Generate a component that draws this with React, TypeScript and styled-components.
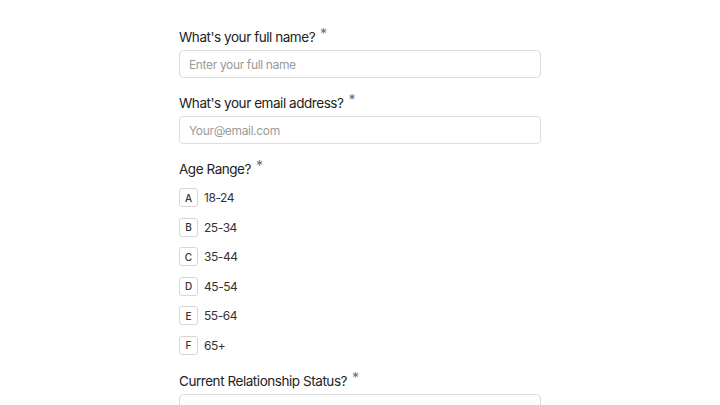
import React from 'react'
import styled, { createGlobalStyle } from 'styled-components'

const GlobalStyle = createGlobalStyle`
  html, body {
    margin: 0;
    padding: 0;
    background: #ffffff;
  }
  body {
    font-family: Inter, "Noto Sans", sans-serif;
    color: #262626;
    overflow: hidden;
  }
`

const Form = styled.form`
  width: 362px;
  margin: 0 auto;
  padding-top: 27px;
  display: flex;
  flex-direction: column;
`

const Field = styled.div<{ $after?: number }>`
  display: flex;
  flex-direction: column;
  margin-bottom: ${(p) => p.$after ?? 15}px;
`

const Label = styled.label<{ $gap?: number }>`
  font-size: 13.5px;
  font-weight: 420;
  letter-spacing: -0.45px;
  line-height: 20px;
  color: #222;
  margin-bottom: ${(p) => p.$gap ?? 3}px;
`

const Star = styled.span`
  display: inline-block;
  margin-left: 5px;
  font-size: 14px;
  font-weight: 400;
  color: #6b6b6b;
  position: relative;
  top: -3px;
`

const Input = styled.input`
  box-sizing: border-box;
  height: 28px;
  width: 100%;
  border: 1px solid #dcdcdc;
  border-radius: 4px;
  padding: 0 9px;
  font-family: Inter, "Noto Sans", sans-serif;
  font-size: 12px;
  letter-spacing: -0.35px;
  color: #262626;
  outline: none;
  &::placeholder {
    color: #9a9a9a;
  }
`

const Options = styled.div`
  display: flex;
  flex-direction: column;
  gap: 10.6px;
`

const Option = styled.div`
  display: flex;
  align-items: center;
  gap: 6px;
  height: 19px;
`

const Key = styled.span`
  box-sizing: border-box;
  width: 19px;
  height: 19px;
  border: 1px solid #d6d6d6;
  border-radius: 3px;
  display: flex;
  align-items: center;
  justify-content: center;
  font-size: 10px;
  font-weight: 500;
  color: #333;
`

const OptionText = styled.span`
  font-size: 12px;
  letter-spacing: -0.45px;
  color: #333;
`

const SelectBox = styled.div`
  box-sizing: border-box;
  height: 28px;
  border: 1px solid #dcdcdc;
  border-radius: 4px;
  display: flex;
  align-items: center;
  justify-content: flex-end;
  padding: 0 10px;
`

const ages = ['18-24', '25-34', '35-44', '45-54', '55-64', '65+']

export default function App() {
  return (
    <>
      <GlobalStyle />
      <Form>
        <Field>
          <Label>
            What's your full name?<Star>*</Star>
          </Label>
          <Input placeholder="Enter your full name" />
        </Field>
        <Field>
          <Label>
            What's your email address?<Star>*</Star>
          </Label>
          <Input placeholder="Your@email.com" />
        </Field>
        <Field $after={16}>
          <Label $gap={9}>
            Age Range?<Star>*</Star>
          </Label>
          <Options>
            {ages.map((a, i) => (
              <Option key={a}>
                <Key>{String.fromCharCode(65 + i)}</Key>
                <OptionText>{a}</OptionText>
              </Option>
            ))}
          </Options>
        </Field>
        <Field>
          <Label>
            Current Relationship Status?<Star>*</Star>
          </Label>
          <SelectBox>
            <svg width="12" height="12" viewBox="0 0 24 24" fill="none" stroke="#888" strokeWidth="2">
              <path d="M6 9l6 6 6-6" />
            </svg>
          </SelectBox>
        </Field>
      </Form>
    </>
  )
}
